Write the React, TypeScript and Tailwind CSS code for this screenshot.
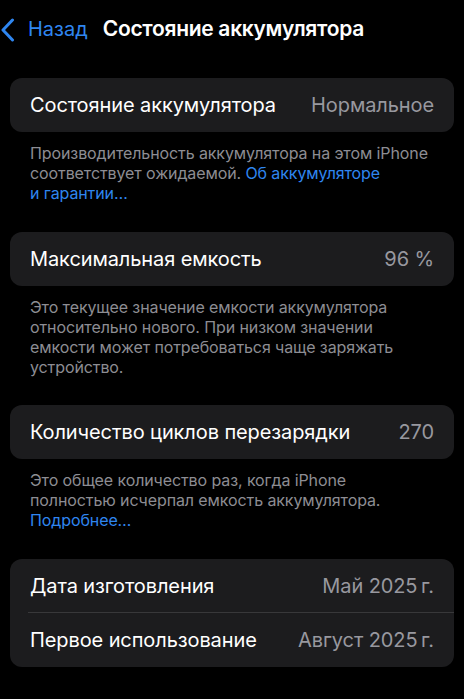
import React from 'react';

const font = { fontFamily: 'Inter, "Noto Sans", sans-serif' };

function Row({ label, value, divider }: { label: string; value: string; divider?: boolean }) {
  return (
    <div className="relative flex h-[54px] items-center justify-between pl-5 pr-5">
      <span className="text-[20px] tracking-[-0.1px] text-white">{label}</span>
      <span className="text-[20px] tracking-[-0.1px] text-[#98989f]">{value}</span>
      {divider && <div className="absolute bottom-0 left-[18px] right-0 h-px bg-[#38383a]" />}
    </div>
  );
}

function Note({ children }: { children: React.ReactNode }) {
  return (
    <p className="whitespace-nowrap px-5 pt-[11px] text-[16px] leading-[20px] tracking-[-0.1px] text-[#8d8d93]">
      {children}
    </p>
  );
}

export default function App() {
  return (
    <div className="h-[699px] w-[464px] overflow-hidden bg-black" style={font}>
      {/* Nav bar */}
      <div className="flex h-[58px] items-center">
        <svg width="14" height="24" viewBox="0 0 14 24" className="ml-[1px] mt-[1px]">
          <path d="M11.5 2 L2 12 L11.5 22" fill="none" stroke="#2f86f0" strokeWidth="3" strokeLinecap="round" strokeLinejoin="round" />
        </svg>
        <span className="ml-[13px] text-[20px] text-[#2f86f0]">Назад</span>
        <span className="ml-[15px] text-[21px] font-semibold tracking-[-0.3px] text-white">Состояние аккумулятора</span>
      </div>

      <div className="px-[10px] pt-[20px]">
        <div className="rounded-[12px] bg-[#1c1c1e]">
          <Row label="Состояние аккумулятора" value="Нормальное" />
        </div>
        <Note>
          Производительность аккумулятора на этом iPhone
          <br />
          соответствует ожидаемой. <span className="text-[#2f86f0]">Об аккумуляторе</span>
          <br />
          <span className="text-[#2f86f0]">и гарантии…</span>
        </Note>

        <div className="mt-[29px] rounded-[12px] bg-[#1c1c1e]">
          <Row label="Максимальная емкость" value="96 %" />
        </div>
        <Note>
          Это текущее значение емкости аккумулятора
          <br />
          относительно нового. При низком значении
          <br />
          емкости может потребоваться чаще заряжать
          <br />
          устройство.
        </Note>

        <div className="mt-[28px] rounded-[12px] bg-[#1c1c1e]">
          <Row label="Количество циклов перезарядки" value="270" />
        </div>
        <Note>
          Это общее количество раз, когда iPhone
          <br />
          полностью исчерпал емкость аккумулятора.
          <br />
          <span className="text-[#2f86f0]">Подробнее…</span>
        </Note>

        <div className="mt-[29px] rounded-[12px] bg-[#1c1c1e]">
          <Row label="Дата изготовления" value={'Май 2025\u2009г.'} divider />
          <Row label="Первое использование" value={'Август 2025\u2009г.'} />
        </div>
      </div>
    </div>
  );
}
